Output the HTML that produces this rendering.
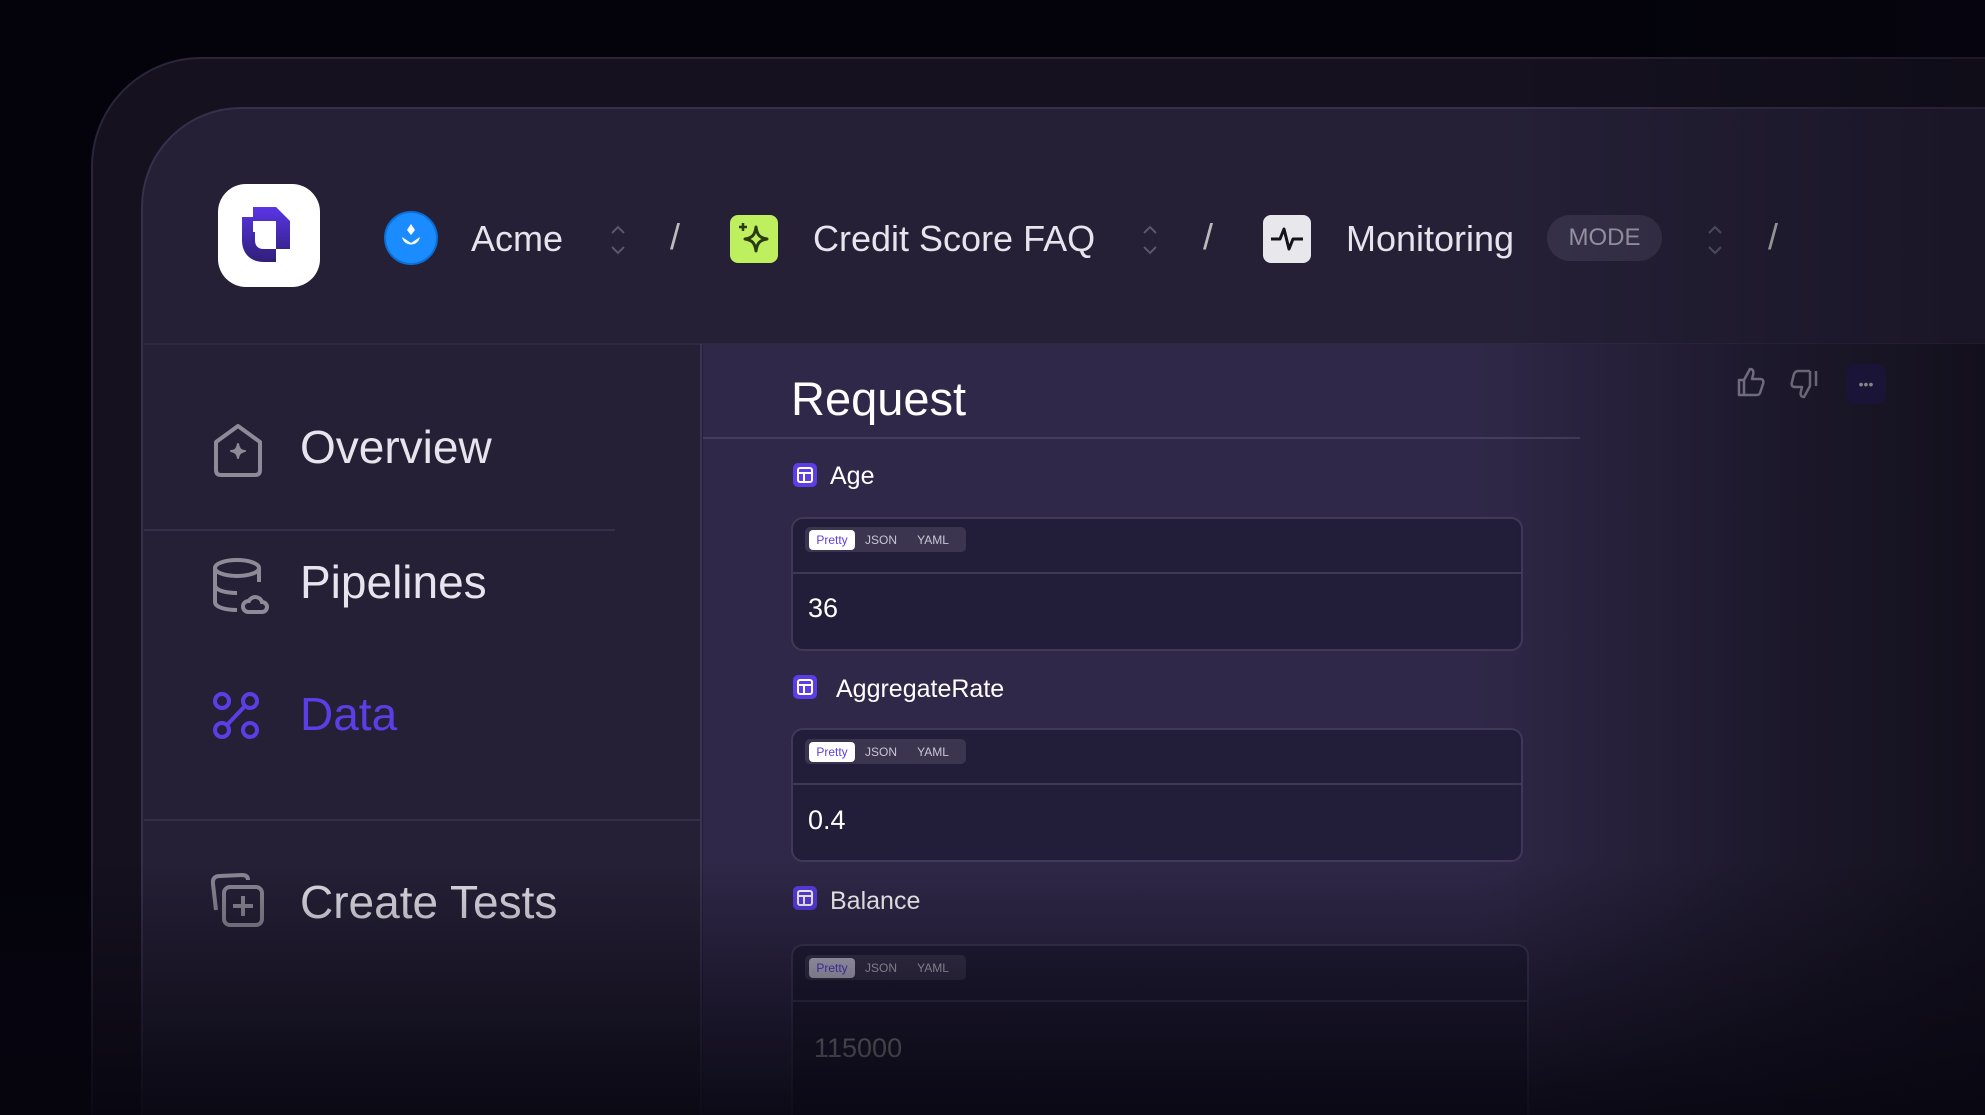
<!DOCTYPE html>
<html><head><meta charset="utf-8"><style>
*{margin:0;padding:0;box-sizing:border-box}
html,body{width:1985px;height:1115px;overflow:hidden;background:#04030c}
body{font-family:"Liberation Sans",sans-serif}
#w{position:relative;width:1985px;height:1115px;overflow:hidden}
.abs{position:absolute}
.outer{left:91px;top:57px;width:2100px;height:1200px;border-radius:110px;background:#15111f;border:2px solid #2a2538}
.inner{left:141px;top:107px;width:2100px;height:1200px;border-radius:100px;background:#252036;border:2px solid #37304a;overflow:hidden}
.t{color:#e6e4ec;white-space:nowrap}
.main{left:703px;top:344px;width:1400px;height:900px;background:linear-gradient(90deg,#2f2848 0%,#2f2848 55%,#1e1a2c 85%,#15121f 100%)}
.box{border:2px solid #40395a;border-radius:12px;background:#221d38;width:732px}
.tg{background:#3b3550;border-radius:5px;height:25px;width:161px;display:flex;align-items:center;padding:0 4px;font-size:12px;color:#c9c5d4}
.tg span{padding:3px 0;width:52px;text-align:center}
.tg .on{background:#fff;color:#5b3ee6;border-radius:4px;width:46px}
.lbl{font-size:25px;color:#fff}
.ico{width:24px;height:24px;background:#5b3ee6;border-radius:5px}
</style></head><body><div id="w">
<div class="abs outer"></div>
<div class="abs inner"></div>
<div class="abs" style="left:144px;top:343px;width:1900px;height:2px;background:#2e2842"></div>
<div class="abs" style="left:218px;top:184px;width:102px;height:103px;background:#fff;border-radius:28px"></div>
<svg class="abs" style="left:218px;top:184px" width="102" height="103" viewBox="0 0 102 103"><defs><linearGradient id="lg" x1="0" y1="0" x2="0" y2="1"><stop offset="0" stop-color="#5a35e6"/><stop offset="1" stop-color="#2f1f78"/></linearGradient></defs>
<path d="M24 33H35V48H24Z M35 23H58L72 37V65H58V37H35Z M24 48H37V56C37 62 40 65 46 65H58V78H46C33 78 24 70 24 56Z" fill="url(#lg)"/></svg>
<div class="abs" style="left:384px;top:211px;width:54px;height:54px;border-radius:50%;background:#1a8cff;border:2px solid #0a6fd6"></div>
<svg class="abs" style="left:384px;top:211px" width="54" height="54"><path d="M27 13l4 6-4 5-4-5z" fill="#fff"/><path d="M18 26c2 10 16 10 18 0l-9 6z" fill="#fff"/></svg>
<div class="abs t" style="left:471px;top:218px;font-size:36px">Acme</div>
<svg class="abs" style="left:609px;top:222px" width="18" height="36"><path d="M3 11l6-6 6 6M3 25l6 6 6-6" stroke="#5b566c" stroke-width="2" fill="none"/></svg>
<div class="abs t" style="left:670px;top:216px;font-size:36px;color:#bbb">/</div>
<div class="abs" style="left:730px;top:215px;width:48px;height:48px;border-radius:8px;background:#bdef5f"></div>
<svg class="abs" style="left:730px;top:215px" width="48" height="48"><path d="M26 12c1 8 4 11 11 12-7 1-10 4-11 12-1-8-4-11-11-12 7-1 10-4 11-12z" stroke="#2b3a10" stroke-width="3" fill="none" stroke-linejoin="round"/><path d="M13 8v8M9 12h8" stroke="#2b3a10" stroke-width="2.5"/></svg>
<div class="abs t" style="left:813px;top:218px;font-size:36px">Credit Score FAQ</div>
<svg class="abs" style="left:1141px;top:222px" width="18" height="36"><path d="M3 11l6-6 6 6M3 25l6 6 6-6" stroke="#5b566c" stroke-width="2" fill="none"/></svg>
<div class="abs t" style="left:1203px;top:216px;font-size:36px;color:#bbb">/</div>
<div class="abs" style="left:1263px;top:215px;width:48px;height:48px;border-radius:8px;background:#e8e7ec"></div>
<svg class="abs" style="left:1263px;top:215px" width="48" height="48"><path d="M8 24h9l4-10 5 20 4-10h10" stroke="#15131c" stroke-width="3" fill="none" stroke-linejoin="round"/></svg>
<div class="abs t" style="left:1346px;top:218px;font-size:36px">Monitoring</div>
<div class="abs" style="left:1547px;top:215px;width:115px;height:46px;border-radius:23px;background:#37324a;color:#9e9aab;font-size:24px;text-align:center;line-height:46px">MODE</div>
<svg class="abs" style="left:1706px;top:222px" width="18" height="36"><path d="M3 11l6-6 6 6M3 25l6 6 6-6" stroke="#5b566c" stroke-width="2" fill="none"/></svg>
<div class="abs t" style="left:1768px;top:216px;font-size:36px;color:#bbb">/</div>
<div class="abs" style="left:700px;top:344px;width:2px;height:800px;background:#3a3450"></div>
<div class="abs" style="left:144px;top:529px;width:471px;height:2px;background:#34304a"></div>
<div class="abs" style="left:144px;top:819px;width:556px;height:2px;background:#34304a"></div>
<svg class="abs" style="left:210px;top:420px" width="56" height="60" viewBox="0 0 56 60"><path d="M28 6L50 22V50Q50 55 45 55H11Q6 55 6 50V22Z" stroke="#8e8b98" stroke-width="4" fill="none" stroke-linejoin="round"/><path d="M28 24c1 5 3 7 7 7-4 1-6 2-7 7-1-5-3-6-7-7 4 0 6-2 7-7z" fill="#8e8b98" stroke="#8e8b98" stroke-width="2" stroke-linejoin="round"/></svg>
<div class="abs t" style="left:300px;top:420px;font-size:46px">Overview</div>
<svg class="abs" style="left:210px;top:556px" width="60" height="60" viewBox="0 0 60 60"><ellipse cx="27" cy="12" rx="22" ry="8" stroke="#8e8b98" stroke-width="4" fill="none"/><path d="M5 12v34c0 5 10 8 22 8M49 12v14M5 29c0 5 10 8 22 8" stroke="#8e8b98" stroke-width="4" fill="none"/><path d="M38 56h14a5 5 0 0 0 0-10 7 7 0 0 0-13-1 5 5 0 0 0-1 11z" stroke="#8e8b98" stroke-width="4" fill="none"/></svg>
<div class="abs t" style="left:300px;top:555px;font-size:46px">Pipelines</div>
<svg class="abs" style="left:210px;top:690px" width="52" height="52" viewBox="0 0 52 52"><circle cx="12" cy="11" r="7" stroke="#5b3ee6" stroke-width="4" fill="none"/><circle cx="40" cy="11" r="7" stroke="#5b3ee6" stroke-width="4" fill="none"/><circle cx="12" cy="40" r="7" stroke="#5b3ee6" stroke-width="4" fill="none"/><circle cx="40" cy="40" r="7" stroke="#5b3ee6" stroke-width="4" fill="none"/><path d="M35 16L17 35" stroke="#5b3ee6" stroke-width="4"/></svg>
<div class="abs t" style="left:300px;top:687px;font-size:46px;color:#5b3ee6">Data</div>
<svg class="abs" style="left:208px;top:870px" width="60" height="60" viewBox="0 0 60 60"><path d="M8 40L5 14Q4 6 12 6L34 5Q40 5 40 10" stroke="#8e8b98" stroke-width="4" fill="none"/><rect x="16" y="17" width="38" height="38" rx="6" stroke="#8e8b98" stroke-width="4" fill="none"/><path d="M35 26v20M25 36h20" stroke="#8e8b98" stroke-width="4"/></svg>
<div class="abs t" style="left:300px;top:875px;font-size:46px">Create Tests</div>
<div class="abs main"></div>
<div class="abs t" style="left:791px;top:371px;font-size:47px;color:#fff">Request</div>
<div class="abs" style="left:703px;top:437px;width:877px;height:2px;background:#443d5e"></div>
<svg class="abs" style="left:1736px;top:366px" width="30" height="32" viewBox="0 0 30 32"><path d="M3 14h5v15H3zM8 14l6-11c3 0 4 2 3 6l-1 4h8c3 0 4 2 3 5l-3 9c-1 2-2 2-4 2H8" stroke="#8a8698" stroke-width="2.5" fill="none" stroke-linejoin="round"/></svg>
<svg class="abs" style="left:1789px;top:368px" width="30" height="32" viewBox="0 0 30 32"><path d="M27 3v15M21 3H9C7 3 6 4 5 6L3 14c-1 3 0 5 3 5h7l-1 4c-1 4 0 6 3 6l6-11V3" stroke="#8a8698" stroke-width="2.5" fill="none" stroke-linejoin="round"/></svg>
<div class="abs" style="left:1846px;top:364px;width:40px;height:40px;border-radius:10px;background:#221a48;color:#bbb;font-size:14px;text-align:center;line-height:40px">•••</div>

<div class="abs ico" style="left:793px;top:463px"></div>
<svg class="abs" style="left:793px;top:463px" width="24" height="24"><rect x="5" y="5" width="14" height="14" rx="2" stroke="#fff" stroke-width="2" fill="none"/><path d="M5 10h14M11 10v9" stroke="#fff" stroke-width="2"/></svg>
<div class="abs lbl" style="left:830px;top:462px">Age</div>
<div class="abs box" style="left:791px;top:517px;height:134px"></div>
<div class="abs" style="left:793px;top:572px;width:728px;height:2px;background:#3f3857"></div>
<div class="abs tg" style="left:805px;top:527px"><span class="on">Pretty</span><span>JSON</span><span>YAML</span></div>
<div class="abs t" style="left:808px;top:593px;font-size:27px;color:#fff">36</div>

<div class="abs ico" style="left:793px;top:675px"></div>
<svg class="abs" style="left:793px;top:675px" width="24" height="24"><rect x="5" y="5" width="14" height="14" rx="2" stroke="#fff" stroke-width="2" fill="none"/><path d="M5 10h14M11 10v9" stroke="#fff" stroke-width="2"/></svg>
<div class="abs lbl" style="left:836px;top:675px">AggregateRate</div>
<div class="abs box" style="left:791px;top:728px;height:134px"></div>
<div class="abs" style="left:793px;top:783px;width:728px;height:2px;background:#3f3857"></div>
<div class="abs tg" style="left:805px;top:739px"><span class="on">Pretty</span><span>JSON</span><span>YAML</span></div>
<div class="abs t" style="left:808px;top:805px;font-size:27px;color:#fff">0.4</div>

<div class="abs ico" style="left:793px;top:886px"></div>
<svg class="abs" style="left:793px;top:886px" width="24" height="24"><rect x="5" y="5" width="14" height="14" rx="2" stroke="#fff" stroke-width="2" fill="none"/><path d="M5 10h14M11 10v9" stroke="#fff" stroke-width="2"/></svg>
<div class="abs lbl" style="left:830px;top:887px">Balance</div>
<div class="abs box" style="left:791px;top:944px;height:200px;width:738px"></div>
<div class="abs" style="left:793px;top:1000px;width:734px;height:2px;background:#3f3857"></div>
<div class="abs tg" style="left:805px;top:955px"><span class="on" style="background:#cfcbe0">Pretty</span><span>JSON</span><span>YAML</span></div>
<div class="abs t" style="left:814px;top:1033px;font-size:27px;color:#aaa">115000</div>

<div class="abs" style="left:0;top:860px;width:1985px;height:255px;background:linear-gradient(180deg,rgba(8,6,16,0) 0%,rgba(8,6,16,.5) 55%,rgba(6,5,14,.85) 100%)"></div>
<div class="abs" style="left:1500px;top:0;width:485px;height:1115px;background:linear-gradient(90deg,rgba(8,6,16,0),rgba(8,6,16,.4))"></div>
</div></body></html>
